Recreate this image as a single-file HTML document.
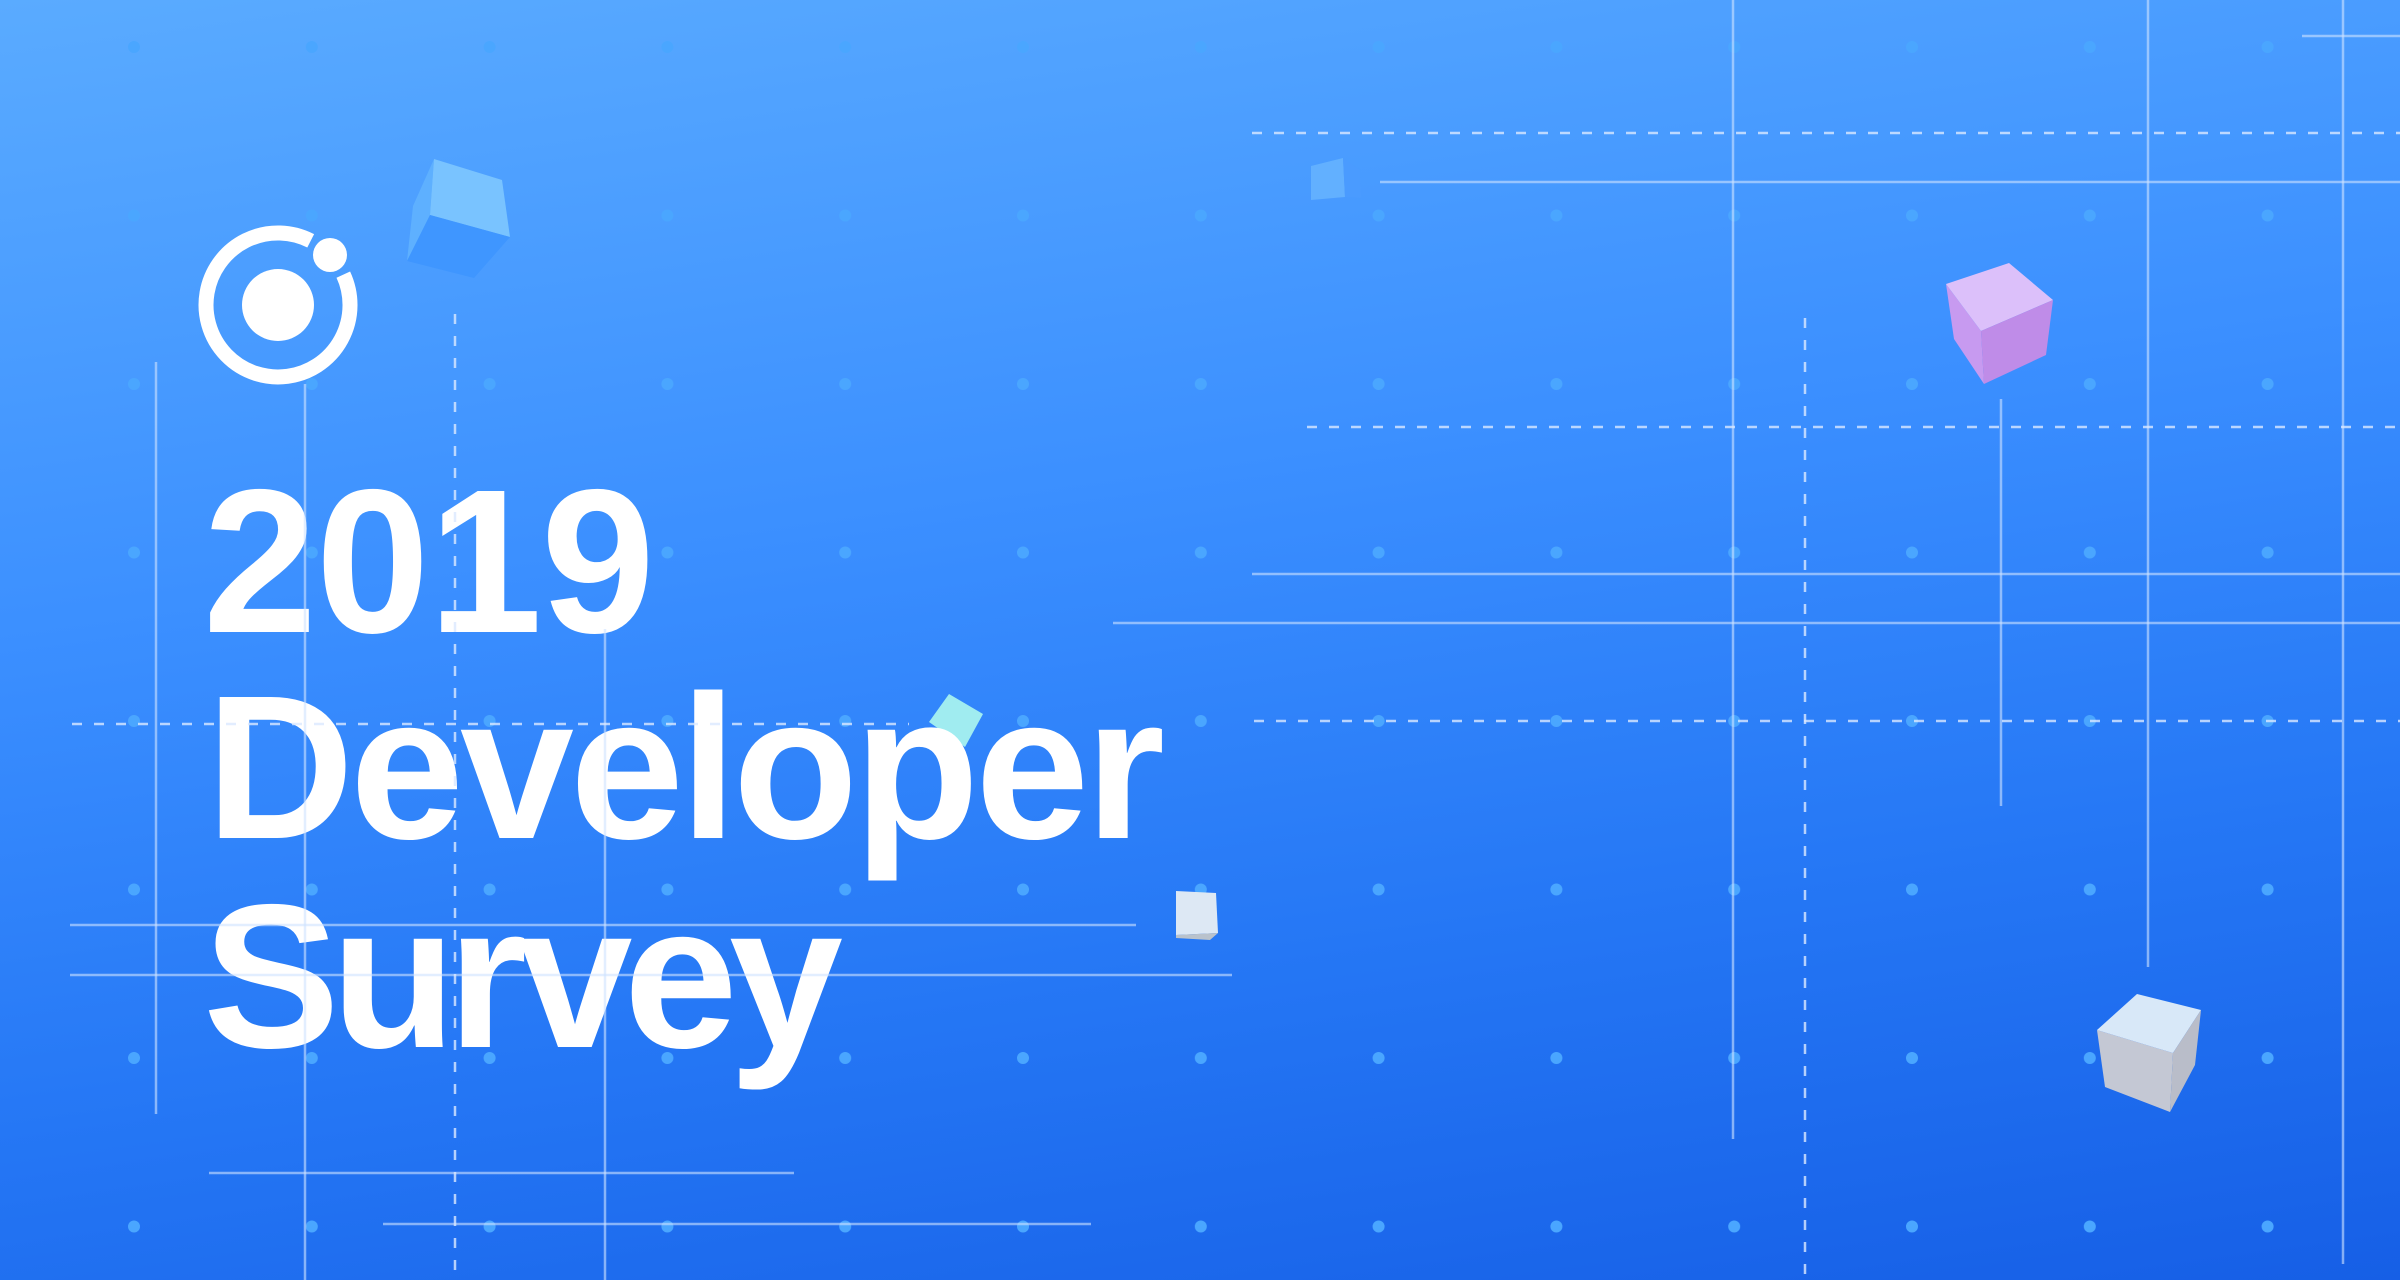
<!DOCTYPE html>
<html><head><meta charset="utf-8"><style>
html,body{margin:0;padding:0;width:2400px;height:1280px;overflow:hidden}
body{background:linear-gradient(172deg,#5aabff 0%,#3b8fff 40%,#2577f5 70%,#165fe6 100%)}
svg{position:absolute;left:0;top:0}
</style></head><body>
<svg width="2400" height="1280" viewBox="0 0 2400 1280" xmlns="http://www.w3.org/2000/svg">
<defs>
<pattern id="dots" x="134" y="47" width="177.8" height="168.5" patternUnits="userSpaceOnUse">
<circle cx="0" cy="0" r="6" fill="#4aa6ff"/>
<circle cx="177.8" cy="0" r="6" fill="#4aa6ff"/>
<circle cx="0" cy="168.5" r="6" fill="#4aa6ff"/>
<circle cx="177.8" cy="168.5" r="6" fill="#4aa6ff"/>
</pattern>
</defs>
<rect x="0" y="0" width="2400" height="1280" fill="url(#dots)"/>

<!-- cubes -->
<polygon points="434,159 413,206 407,261 430,215" fill="#5eb0ff"/>
<polygon points="434,159 502,180 510,237 430,215" fill="#79c3ff"/>
<polygon points="430,215 510,237 474,278 407,261" fill="#3f96ff"/>
<polygon points="949,694 983,714 965,747 929,722" fill="#a0ecf0"/>
<polygon points="1176,891 1216,893 1218,933 1176,935" fill="#dde8f4"/>
<polygon points="1176,935 1218,933 1210,940 1176,938" fill="#b9c2cc"/>
<polygon points="1311,166 1343,158 1345,197 1311,200" fill="#62b0ff"/>
<polygon points="1343,158 1360,170 1361,198 1345,197" fill="#4a9bff"/>
<polygon points="1946,284 1981,331 1984,384 1954,339" fill="#c79af0"/>
<polygon points="1946,284 2009,263 2053,300 1981,331" fill="#dcc0fa"/>
<polygon points="1981,331 2053,300 2046,355 1984,384" fill="#bf8ce8"/>
<polygon points="2097,1030 2173,1053 2170,1112 2105,1087" fill="#c4c8d4"/>
<polygon points="2137,994 2201,1010 2173,1053 2097,1030" fill="#d8e8f8"/>
<polygon points="2173,1053 2201,1010 2195,1065 2170,1112" fill="#b9bdc9"/>

<!-- logo -->
<path d="M343.3,274.6 A72,72 0 1 1 310.7,240.8" fill="none" stroke="#fff" stroke-width="15"/>
<circle cx="278" cy="305" r="36" fill="#fff"/>
<circle cx="330" cy="255" r="17" fill="#fff"/>

<!-- text -->
<g font-family="Liberation Sans, sans-serif" font-weight="700" fill="#fff" font-size="205">
<text x="203" y="632" textLength="452" lengthAdjust="spacing">2019</text>
<text x="206" y="838" textLength="959" lengthAdjust="spacing">Developer</text>
<text x="203" y="1047" textLength="640" lengthAdjust="spacing">Survey</text>
</g>

<!-- lines -->
<g stroke="#cfe3ff" stroke-opacity="0.6" stroke-width="2.5" fill="none">
<line x1="156" y1="362" x2="156" y2="1114"/>
<line x1="305" y1="384" x2="305" y2="1280"/>
<line x1="605" y1="629" x2="605" y2="1280"/>
<line x1="70" y1="925" x2="1136" y2="925"/>
<line x1="70" y1="975" x2="1232" y2="975"/>
<line x1="209" y1="1173" x2="794" y2="1173"/>
<line x1="383" y1="1224" x2="1091" y2="1224"/>
<line x1="1113" y1="623" x2="2400" y2="623"/>
<line x1="1252" y1="574" x2="2400" y2="574"/>
<line x1="1380" y1="182" x2="2400" y2="182"/>
<line x1="2302" y1="36" x2="2400" y2="36"/>
<line x1="1733" y1="0" x2="1733" y2="1139"/>
<line x1="2148" y1="0" x2="2148" y2="967"/>
<line x1="2343" y1="0" x2="2343" y2="1264"/>
<line x1="2001" y1="399" x2="2001" y2="806"/>
</g>
<g stroke="#dbe9ff" stroke-opacity="0.8" stroke-width="2.5" fill="none" stroke-dasharray="10 12">
<line x1="455" y1="314" x2="455" y2="1280"/>
<line x1="1805" y1="318" x2="1805" y2="1280"/>
<line x1="72" y1="724" x2="909" y2="724"/>
<line x1="1254" y1="721" x2="2400" y2="721"/>
<line x1="1252" y1="133" x2="2400" y2="133"/>
<line x1="1307" y1="427" x2="2400" y2="427"/>
</g>
</svg>
</body></html>
